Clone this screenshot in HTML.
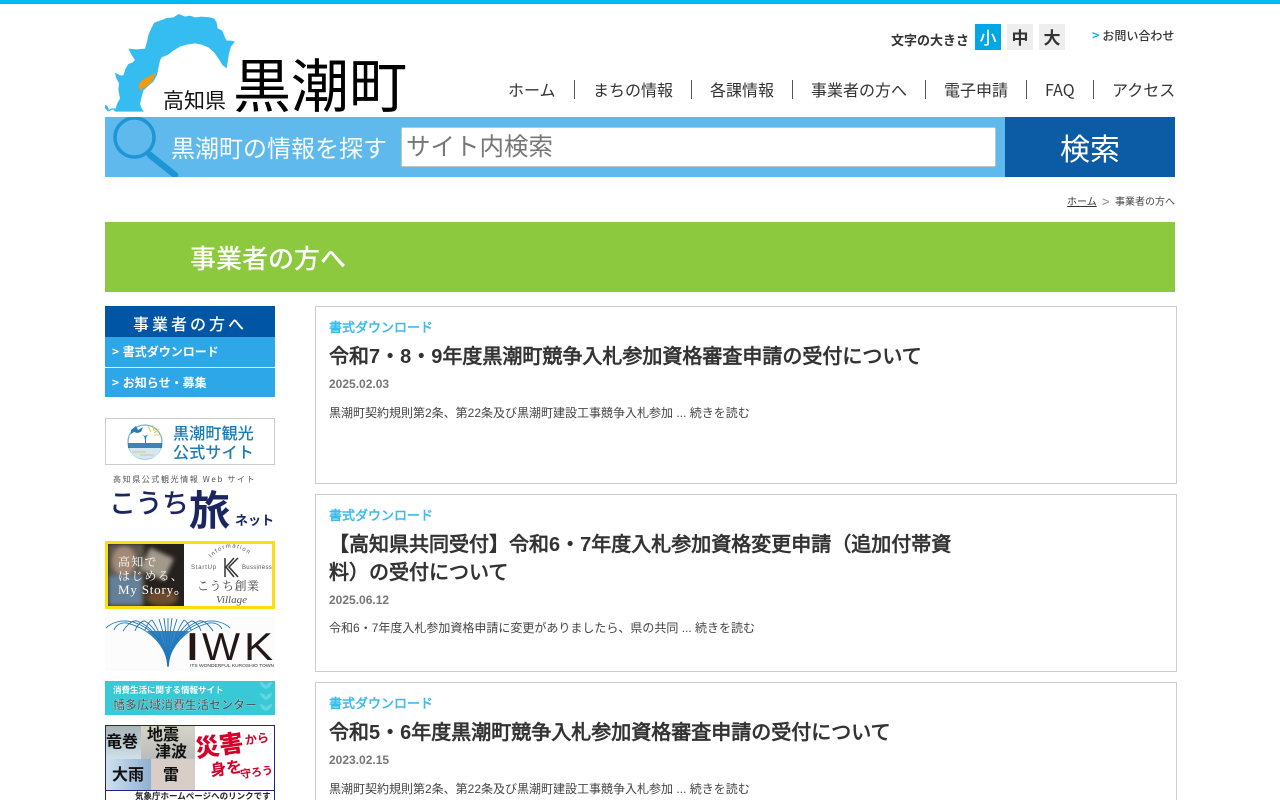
<!DOCTYPE html>
<html lang="ja"><head><meta charset="utf-8"><title>事業者の方へ | 高知県黒潮町</title>
<style>
html,body{margin:0;padding:0;background:#fff;width:1280px;height:800px;overflow:hidden;}
#w{position:relative;width:1280px;height:800px;overflow:hidden;font-family:"Liberation Sans","WenQuanYi Zen Hei",sans-serif;color:#333;}
.a{position:absolute;white-space:nowrap;}
.n{font-family:"Noto Sans CJK JP",sans-serif;}
.d{font-family:"Noto Sans CJK JP",sans-serif;}
.nav{top:77px;font-size:16px;line-height:25px;color:#333;}
.sep{position:absolute;top:80px;width:1px;height:19px;background:#555;}
.card{position:absolute;left:315px;width:860px;height:176px;border:1px solid #ccc;}
.cat{position:absolute;left:13px;top:12px;font-size:13px;line-height:18px;font-weight:bold;color:#3cbcec;white-space:nowrap;}
.tt{position:absolute;left:13px;top:34px;font-size:20px;line-height:28px;font-weight:bold;color:#333;width:630px;}
.dt{position:absolute;left:13px;font-size:12px;line-height:16px;font-weight:bold;color:#777;}
.ex{position:absolute;left:13px;font-size:12px;line-height:16px;color:#444;white-space:nowrap;}
.sb{position:absolute;left:105px;width:170px;height:30px;background:#2ea7e8;color:#fff;font-size:12px;font-weight:bold;line-height:30px;text-indent:7px;word-spacing:1px;}
</style></head><body><div id="w">
<div class="a" style="left:0;top:0;width:1280px;height:4px;background:#00b7ee"></div>

<svg class="a" style="left:95px;top:0" width="340" height="113" viewBox="0 0 1020 339">
<path fill="#35bdf2" d="M30 315L38 318 42 330 50 325 62 325 66 312 75 295 70 270 72 250 64 235 60 218 75 226 85 226 92 205 100 192 112 188 120 180 110 165 100 146 125 148 150 146 156 125 160 105 170 82 178 68 200 60 215 54 235 52 252 42 270 50 285 47 300 52 320 50 345 52 358 56 365 68 368 85 382 92 388 108 395 122 408 122 420 125 408 140 402 160 398 185 395 205 382 195 372 178 358 158 340 142 320 134 300 130 275 134 255 140 235 152 218 165 200 172 195 182 190 205 186 225 175 245 155 262 145 272 140 290 135 312 140 325 147 335 60 335 55 328 40 335 30 325Z"/>
<path fill="#f39a0e" d="M131 258L136 246 148 236 165 228 182 218 177 232 170 246 157 258 145 264 137 272 133 268Z"/>
</svg>
<div class="a n" style="left:163px;top:85px;font-size:21px;line-height:30px;color:#111">高知県</div>
<div class="a n" style="left:233px;top:42px;font-size:58px;line-height:80px;color:#000">黒潮町</div>

<div class="a n" style="left:891px;top:30px;font-size:13px;line-height:20px;font-weight:bold;color:#333">文字の大きさ</div>
<div class="a n" style="left:975px;top:24px;width:26px;height:26px;background:#00a7e5;color:#fff;font-size:17px;line-height:26px;text-align:center;font-weight:500">小</div>
<div class="a n" style="left:1007px;top:24px;width:26px;height:26px;background:#eee;color:#333;font-size:17px;line-height:26px;text-align:center;font-weight:bold">中</div>
<div class="a n" style="left:1039px;top:24px;width:26px;height:26px;background:#eee;color:#333;font-size:17px;line-height:26px;text-align:center;font-weight:bold">大</div>
<div class="a n" style="left:1092px;top:25px;font-size:12px;line-height:19px;color:#333;font-weight:500"><span style="color:#19b5ea;font-weight:bold;font-size:13px">&gt;</span> お問い合わせ</div>

<div class="a n nav" style="left:508px">ホーム</div><div class="sep" style="left:574px"></div>
<div class="a n nav" style="left:593px">まちの情報</div><div class="sep" style="left:691px"></div>
<div class="a n nav" style="left:710px">各課情報</div><div class="sep" style="left:792px"></div>
<div class="a n nav" style="left:811px">事業者の方へ</div><div class="sep" style="left:925px"></div>
<div class="a n nav" style="left:944px">電子申請</div><div class="sep" style="left:1026px"></div>
<div class="a n nav" style="left:1045px">FAQ</div><div class="sep" style="left:1093px"></div>
<div class="a n nav" style="left:1112px">アクセス</div>

<div class="a" style="left:105px;top:117px;width:900px;height:60px;background:#60b9ec;overflow:hidden">
<svg width="90" height="60" style="position:absolute;left:0;top:0"><circle cx="29.500" cy="20.500" r="19.500" fill="none" stroke="#1c96d4" stroke-width="3.500"/><path d="M45 38L70 58" stroke="#1c96d4" stroke-width="6.500" stroke-linecap="round"/></svg>
<div class="a n" style="left:66px;top:11px;font-size:24px;line-height:38px;color:#fff;opacity:.95">黒潮町の情報を探す</div>
<div class="a" style="left:296px;top:10px;width:593px;height:38px;background:#fff;border:1px solid #c4c4c4;border-radius:2px"></div>
<div class="a n" style="left:301px;top:11px;font-size:24.500px;line-height:36px;color:#777">サイト内検索</div>
</div>
<div class="a n" style="left:1005px;top:117px;width:170px;height:60px;background:#0c5ca5;color:#fff;font-size:30px;line-height:60px;text-align:center">検索</div>

<div class="a" style="left:1067px;top:195px;font-size:10px;line-height:15px;color:#333;text-decoration:underline">ホーム</div>
<div class="a" style="left:1102px;top:194px;font-size:13px;line-height:15px;color:#888">&gt;</div>
<div class="a" style="left:1115px;top:195px;font-size:10px;line-height:15px;color:#444">事業者の方へ</div>

<div class="a" style="left:105px;top:222px;width:1070px;height:70px;background:#8cc93f"></div>
<div class="a n" style="left:190px;top:238px;font-size:26px;line-height:40px;color:#fff;font-weight:500">事業者の方へ</div>

<!-- sidebar -->
<div class="a n" style="left:105px;top:306px;width:170px;height:31px;background:#0056a4;color:#fff;font-size:16px;line-height:34px;text-align:center;letter-spacing:3px;font-weight:500">事業者の方へ</div>
<div class="sb n" style="top:337px">&gt; 書式ダウンロード</div>
<div class="sb n" style="top:368px;height:29px;line-height:30px">&gt; お知らせ・募集</div>

<div class="a" style="left:105px;top:418px;width:168px;height:45px;border:1px solid #ccc;background:#fff">
<svg width="40" height="40" style="position:absolute;left:20px;top:3px" viewBox="0 0 40 40"><circle cx="19" cy="20" r="17" fill="#fff" stroke="#6fb4d8" stroke-width="1.300"/><path d="M3 26h32C33 33 27 37 19 37S5 33 3 26z" fill="#d5e8f2"/><rect x="2" y="21" width="34" height="5" fill="#1f6fa8" opacity=".85"/><path d="M5 8l5-4 2 4 5-3-2 5-4 1-3-1-3 2zM19 21c0-5 0-7-4-9l4 2 4-2c-3 2-3 4-3 9z" fill="#2b7cb8"/><path d="M22 4l3 6M27 3l1 6M33 7l-5 4M36 13l-8 0" stroke="#f0cd4c" stroke-width="1.100"/><path d="M6 30h14M14 33h14" stroke="#d8c488" stroke-width="1"/></svg>
<div class="a n" style="left:67px;top:3px;font-size:16px;line-height:20px;color:#1b7bb4;font-weight:500;letter-spacing:.2px">黒潮町観光</div>
<div class="a n" style="left:67px;top:22px;font-size:16px;line-height:20px;color:#1b7bb4;font-weight:500;letter-spacing:.2px">公式サイト</div>
</div>

<div class="a n" style="left:113px;top:474px;font-size:8px;line-height:12px;color:#555;letter-spacing:1.600px">高知県公式観光情報 Web サイト</div>
<div class="a n" style="left:109px;top:484px;font-size:27px;line-height:36px;color:#1b2562;font-weight:500;letter-spacing:-.5px">こうち</div>
<div class="a n" style="left:189px;top:482px;font-size:41px;line-height:50px;color:#1b2562;font-weight:bold">旅</div>
<div class="a n" style="left:235px;top:510px;font-size:13px;line-height:20px;color:#1b2562;font-weight:bold">ネット</div>

<div class="a" style="left:105px;top:541px;width:170px;height:68px;background:#fbdd10;overflow:hidden">
<div class="a" style="left:3px;top:3px;width:76px;height:62px;background:#26211d;overflow:hidden">
<div style="position:absolute;inset:0;filter:blur(2px)">
<div class="a" style="left:0;top:0;width:36px;height:62px;background:#5e5a52"></div>
<div class="a" style="left:0;top:32px;width:34px;height:30px;background:#647f98"></div>
<div class="a" style="left:4px;top:2px;width:24px;height:30px;border-radius:50%;background:#a38a78"></div>
<div class="a" style="left:36px;top:8px;width:26px;height:24px;background:#a39a8c;transform:rotate(25deg)"></div>
<div class="a" style="left:38px;top:46px;width:32px;height:16px;border-radius:50%;background:#6e4a30"></div>
</div></div>
<div class="a" style="left:79px;top:3px;width:88px;height:62px;background:#fff"></div>
<div class="a" style="left:13px;top:14px;font-family:'Noto Serif CJK SC',serif;font-size:12px;line-height:14px;color:#fff;letter-spacing:1.200px">高知で<br>はじめる、</div>
<div class="a" style="left:13px;top:42px;font-family:'Liberation Serif',serif;font-size:13px;line-height:14px;color:#fff;letter-spacing:.8px">My Story。</div>
<div class="a" style="left:86px;top:23px;font-size:6px;line-height:8px;color:#555;letter-spacing:.8px">StartUp</div>
<div class="a" style="left:137px;top:23px;font-size:6px;line-height:8px;color:#555;letter-spacing:.3px">Bussiness</div>
<svg class="a" style="left:0;top:0" width="170" height="30" viewBox="0 0 170 30"><path id="ar" d="M106 17Q126 -4 148 17" fill="none"/><text font-size="6" fill="#555" letter-spacing="1.200" font-family="Liberation Sans"><textPath href="#ar">Information</textPath></text></svg>
<svg class="a" style="left:118px;top:16px" width="18" height="22"><path d="M2 1v19M15 1L6 10l9 10M11 1L3 10l8 10" fill="none" stroke="#333" stroke-width="1.500"/></svg>
<div class="a" style="left:92px;top:37px;font-family:'Noto Serif CJK SC',serif;font-size:12px;line-height:15px;color:#444;letter-spacing:.5px">こうち創業</div>
<div class="a" style="left:111px;top:52px;font-family:'Liberation Serif',serif;font-style:italic;font-size:11px;line-height:14px;color:#555">Village</div>
</div>

<svg class="a" style="left:105px;top:617px" width="170" height="54" viewBox="0 0 170 54">
<rect width="170" height="54" fill="#fcfcfc"/>
<g fill="none" stroke="#1f76b9" stroke-width=".9">
<path d="M63 50C62 30 50 12 28 5 16 2 6 6 1 11"/><path d="M63 50C62 30 46 12 22 6 16 5 11 8 9 13"/><path d="M63 50C61 28 48 10 32 4 27 3 22 8 18 14"/><path d="M63 50C61 28 50 10 40 4 36 4 32 8 30 14"/><path d="M63 50C61 28 52 10 47 3 44 4 42 8 40 13"/><path d="M63 50C62 26 56 8 54 2"/><path d="M63 50C62 26 60 8 59 1"/><path d="M63 50C63 26 63 8 63 1"/><path d="M63 50C64 26 66 8 67 1"/><path d="M63 50C64 26 70 8 72 2"/><path d="M63 50C65 28 74 10 79 3 82 4 84 8 86 13"/><path d="M63 50C65 28 76 10 86 4 90 4 94 8 96 14"/><path d="M63 50C65 28 78 10 94 4 99 3 104 8 108 14"/><path d="M63 50C64 30 80 12 104 6 110 5 115 8 117 12"/><path d="M63 50C64 30 76 12 98 5 110 2 120 6 125 11"/>
</g><path d="M63 50C62 34 52 22 42 14h42C74 22 64 34 63 50z" fill="#1e78bc" opacity=".9"/>
<g font-family="Liberation Sans" font-size="39" fill="#231815">
<text x="82" y="43" font-weight="bold">I</text>
<text x="97" y="43" textLength="38" lengthAdjust="spacingAndGlyphs">W</text>
<text x="139" y="43" textLength="29" lengthAdjust="spacingAndGlyphs">K</text>
</g>
<text x="85" y="50" font-family="Liberation Sans" font-size="4.500" fill="#333" textLength="84" lengthAdjust="spacingAndGlyphs">ITS  WONDERFUL KUROSHIO TOWN</text>
</svg>

<div class="a" style="left:105px;top:681px;width:170px;height:34px;background:#37c9d6;overflow:hidden">
<svg class="a" style="left:153px;top:0" width="17" height="34"><g fill="#62d5df"><path d="M8 8C3 6 2 3 2 1 5 1 7 3 8 5 9 3 11 1 14 1 14 3 13 6 8 8zM8 19C3 17 2 14 2 12 5 12 7 14 8 16 9 14 11 12 14 12 14 14 13 17 8 19zM8 30C3 28 2 25 2 23 5 23 7 25 8 27 9 25 11 23 14 23 14 25 13 28 8 30z"/></g></svg>
<div class="a n" style="left:8px;top:3px;font-size:8.500px;line-height:13px;color:#fff;font-weight:bold">消費生活に関する情報サイト</div>
<div class="a n" style="left:8px;top:16px;font-size:12px;line-height:16px;color:#3c6166;font-weight:bold;-webkit-text-stroke:.2px #fff">幡多広域消費生活センター</div>
</div>

<div class="a" style="left:105px;top:725px;width:168px;height:64px;border:1px solid #23237e;background:#fff;overflow:hidden">
<div class="a" style="left:0;top:0;width:35px;height:33px;background:linear-gradient(#a8b4bb,#d0e0e8)"></div>
<div class="a" style="left:35px;top:0;width:54px;height:33px;background:linear-gradient(#d5d5c8,#bbb)"></div>
<div class="a" style="left:0;top:33px;width:45px;height:31px;background:linear-gradient(90deg,#cfe0f0,#8fb0d0)"></div>
<div class="a" style="left:45px;top:33px;width:44px;height:31px;background:#d9cdc8"></div>
<div class="a n" style="left:0;top:4px;font-size:16px;line-height:20px;font-weight:bold;color:#111">竜巻</div>
<div class="a n" style="left:41px;top:-1px;font-size:16px;line-height:17px;font-weight:bold;color:#111">地震</div>
<div class="a n" style="left:49px;top:16px;font-size:16px;line-height:17px;font-weight:bold;color:#111">津波</div>
<div class="a n" style="left:6px;top:37px;font-size:16px;line-height:20px;font-weight:bold;color:#111">大雨</div>
<div class="a n" style="left:57px;top:37px;font-size:16px;line-height:20px;font-weight:bold;color:#111">雷</div>
<div class="a n" style="left:89px;top:3px;font-size:24px;line-height:30px;font-weight:900;color:#d4002a;transform:rotate(-8deg)">災害</div>
<div class="a n" style="left:139px;top:4px;font-size:12px;line-height:18px;font-weight:bold;color:#d4002a;transform:rotate(-8deg)">から</div>
<div class="a n" style="left:104px;top:29px;font-size:16px;line-height:24px;font-weight:bold;color:#d4002a;transform:rotate(-8deg)">身を</div>
<div class="a n" style="left:134px;top:37px;font-size:11px;line-height:18px;font-weight:bold;color:#d4002a;transform:rotate(-8deg)">守ろう</div>
</div>
<div class="a" style="left:105px;top:790px;width:168px;height:9px;border:1px solid #23237e;border-bottom:0;background:#fff;overflow:hidden">
<div class="a n" style="left:29px;top:0;font-size:8.500px;line-height:11px;color:#222;font-weight:bold">気象庁ホームページへのリンクです</div>
</div>

<!-- cards -->
<div class="card" style="top:306px">
<div class="cat">書式ダウンロード</div>
<div class="tt">令和7<span class="d">・</span>8<span class="d">・</span>9年度黒潮町競争入札参加資格審査申請の受付について</div>
<div class="dt" style="top:69px">2025.02.03</div>
<div class="ex" style="top:98px">黒潮町契約規則第2条、第22条及び黒潮町建設工事競争入札参加 ... 続きを読む</div>
</div>
<div class="card" style="top:494px">
<div class="cat">書式ダウンロード</div>
<div class="tt">【高知県共同受付】令和6<span class="d">・</span>7年度入札参加資格変更申請（追加付帯資料）の受付について</div>
<div class="dt" style="top:97px">2025.06.12</div>
<div class="ex" style="top:125px">令和6<span class="d">・</span>7年度入札参加資格申請に変更がありましたら、県の共同 ... 続きを読む</div>
</div>
<div class="card" style="top:682px;height:117px;border-bottom:0">
<div class="cat">書式ダウンロード</div>
<div class="tt">令和5<span class="d">・</span>6年度黒潮町競争入札参加資格審査申請の受付について</div>
<div class="dt" style="top:69px">2023.02.15</div>
<div class="ex" style="top:98px">黒潮町契約規則第2条、第22条及び黒潮町建設工事競争入札参加 ... 続きを読む</div>
</div>
</div></body></html>
